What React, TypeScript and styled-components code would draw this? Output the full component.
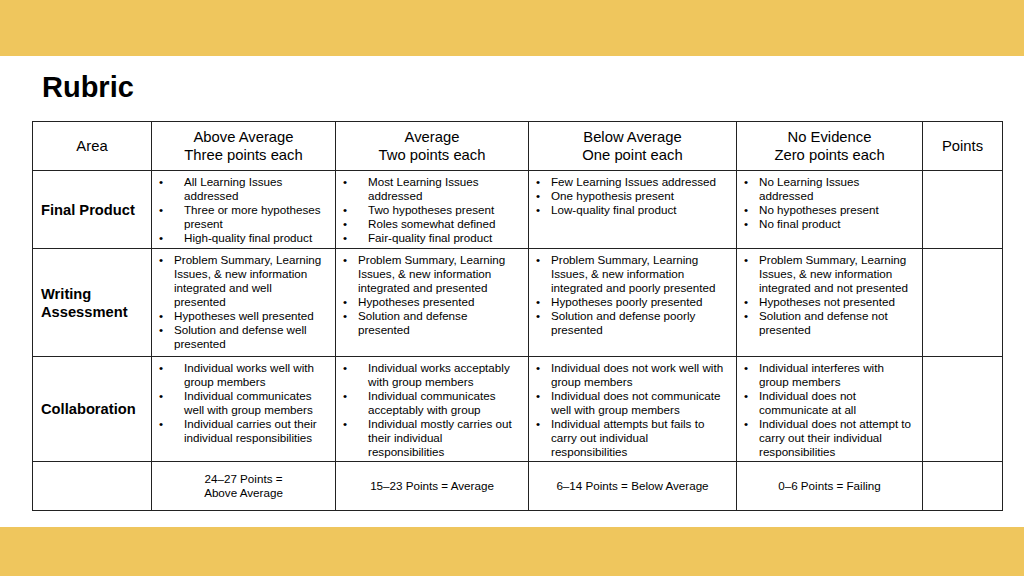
import React from "react";
import styled, { createGlobalStyle } from "styled-components";

const GlobalStyle = createGlobalStyle`
  html, body {
    margin: 0;
    padding: 0;
    background: #ffffff;
  }
  body {
    font-family: "Liberation Sans", Arial, sans-serif;
    color: #000;
  }
`;

const Page = styled.div`
  width: 1024px;
  height: 576px;
  display: flex;
  flex-direction: column;
  overflow: hidden;
  background: #ffffff;
`;

const Band = styled.div<{ $h: number }>`
  flex: 0 0 ${(p) => p.$h}px;
  background: #efc65d;
`;

const Main = styled.main`
  display: flex;
  flex-direction: column;
  align-items: flex-start;
  padding-top: 14px;
`;

const Title = styled.h1`
  margin: 0 0 17px 42px;
  font-size: 29px;
  line-height: 34px;
  font-weight: 700;
  letter-spacing: 0;
`;

const Footer = styled(Band)`
  margin-top: auto;
`;

const Grid = styled.div`
  margin-left: 32px;
  display: grid;
  grid-template-columns: 118px 183px 192px 207px 185px 79px;
  grid-template-rows: 48px 77px 107px 104px 48px;
  gap: 1px;
  background: #222;
  border: 1px solid #222;
`;

const Cell = styled.div`
  background: #fff;
  min-width: 0;
`;

const HeadCell = styled(Cell)`
  display: flex;
  align-items: center;
  justify-content: center;
  text-align: center;
  font-size: 14.8px;
  line-height: 18px;
  white-space: pre-line;
`;

const AreaCell = styled(Cell)`
  display: flex;
  align-items: center;
  padding-left: 8px;
  font-size: 14.7px;
  line-height: 18px;
  font-weight: 700;
  white-space: pre-line;
`;

const BodyCell = styled(Cell)`
  padding: 4px 4px 0 7px;
`;

const List = styled.ul`
  list-style: none;
  margin: 0;
  padding: 0;
  font-size: 11.65px;
  line-height: 14px;
`;

const Item = styled.li`
  display: flex;
  align-items: flex-start;
`;

const Bullet = styled.span<{ $w: number }>`
  flex: 0 0 ${(p) => p.$w}px;
`;

const ItemText = styled.span`
  white-space: pre-line;
`;

const TotalCell = styled(Cell)`
  display: flex;
  align-items: center;
  justify-content: center;
  text-align: center;
  font-size: 11.65px;
  line-height: 14px;
  white-space: pre-line;
`;

type Col = { wide: boolean; items: string[] };
type Row = { area: string; cols: Col[] };

const headers = [
  "Area",
  "Above Average\nThree points each",
  "Average\nTwo points each",
  "Below Average\nOne point each",
  "No Evidence\nZero points each",
  "Points",
];

const rows: Row[] = [
  {
    area: "Final Product",
    cols: [
      {
        wide: true,
        items: [
          "All Learning Issues\naddressed",
          "Three or more hypotheses\npresent",
          "High-quality final product",
        ],
      },
      {
        wide: true,
        items: [
          "Most Learning Issues\naddressed",
          "Two hypotheses present",
          "Roles somewhat defined",
          "Fair-quality final product",
        ],
      },
      {
        wide: false,
        items: [
          "Few Learning Issues addressed",
          "One hypothesis present",
          "Low-quality final product",
        ],
      },
      {
        wide: false,
        items: [
          "No Learning Issues\naddressed",
          "No hypotheses present",
          "No final product",
        ],
      },
    ],
  },
  {
    area: "Writing\nAssessment",
    cols: [
      {
        wide: false,
        items: [
          "Problem Summary, Learning\nIssues, & new information\nintegrated and well\npresented",
          "Hypotheses well presented",
          "Solution and defense well\npresented",
        ],
      },
      {
        wide: false,
        items: [
          "Problem Summary, Learning\nIssues, & new information\nintegrated and presented",
          "Hypotheses presented",
          "Solution and defense\npresented",
        ],
      },
      {
        wide: false,
        items: [
          "Problem Summary, Learning\nIssues, & new information\nintegrated and poorly presented",
          "Hypotheses poorly presented",
          "Solution and defense poorly\npresented",
        ],
      },
      {
        wide: false,
        items: [
          "Problem Summary, Learning\nIssues, & new information\nintegrated and not presented",
          "Hypotheses not presented",
          "Solution and defense not\npresented",
        ],
      },
    ],
  },
  {
    area: "Collaboration",
    cols: [
      {
        wide: true,
        items: [
          "Individual works well with\ngroup members",
          "Individual communicates\nwell with group members",
          "Individual carries out their\nindividual responsibilities",
        ],
      },
      {
        wide: true,
        items: [
          "Individual works acceptably\nwith group members",
          "Individual communicates\nacceptably with group",
          "Individual mostly carries out\ntheir individual\nresponsibilities",
        ],
      },
      {
        wide: false,
        items: [
          "Individual does not work well with\ngroup members",
          "Individual does not communicate\nwell with group members",
          "Individual attempts but fails to\ncarry out individual\nresponsibilities",
        ],
      },
      {
        wide: false,
        items: [
          "Individual interferes with\ngroup members",
          "Individual does not\ncommunicate at all",
          "Individual does not attempt to\ncarry out their individual\nresponsibilities",
        ],
      },
    ],
  },
];

const totals = [
  "24–27 Points =\nAbove Average",
  "15–23 Points = Average",
  "6–14 Points = Below Average",
  "0–6 Points = Failing",
];

export default function App() {
  return (
    <>
      <GlobalStyle />
      <Page>
        <Band $h={56} />
        <Main>
          <Title>Rubric</Title>
          <Grid>
            {headers.map((h) => (
              <HeadCell key={h}>{h}</HeadCell>
            ))}
            {rows.map((row) => (
              <React.Fragment key={row.area}>
                <AreaCell>{row.area}</AreaCell>
                {row.cols.map((col, ci) => (
                  <BodyCell key={ci}>
                    <List>
                      {col.items.map((it) => (
                        <Item key={it}>
                          <Bullet $w={col.wide ? 25 : 15}>•</Bullet>
                          <ItemText>{it}</ItemText>
                        </Item>
                      ))}
                    </List>
                  </BodyCell>
                ))}
                <Cell />
              </React.Fragment>
            ))}
            <Cell />
            {totals.map((t) => (
              <TotalCell key={t}>{t}</TotalCell>
            ))}
            <Cell />
          </Grid>
        </Main>
        <Footer $h={49} />
      </Page>
    </>
  );
}
